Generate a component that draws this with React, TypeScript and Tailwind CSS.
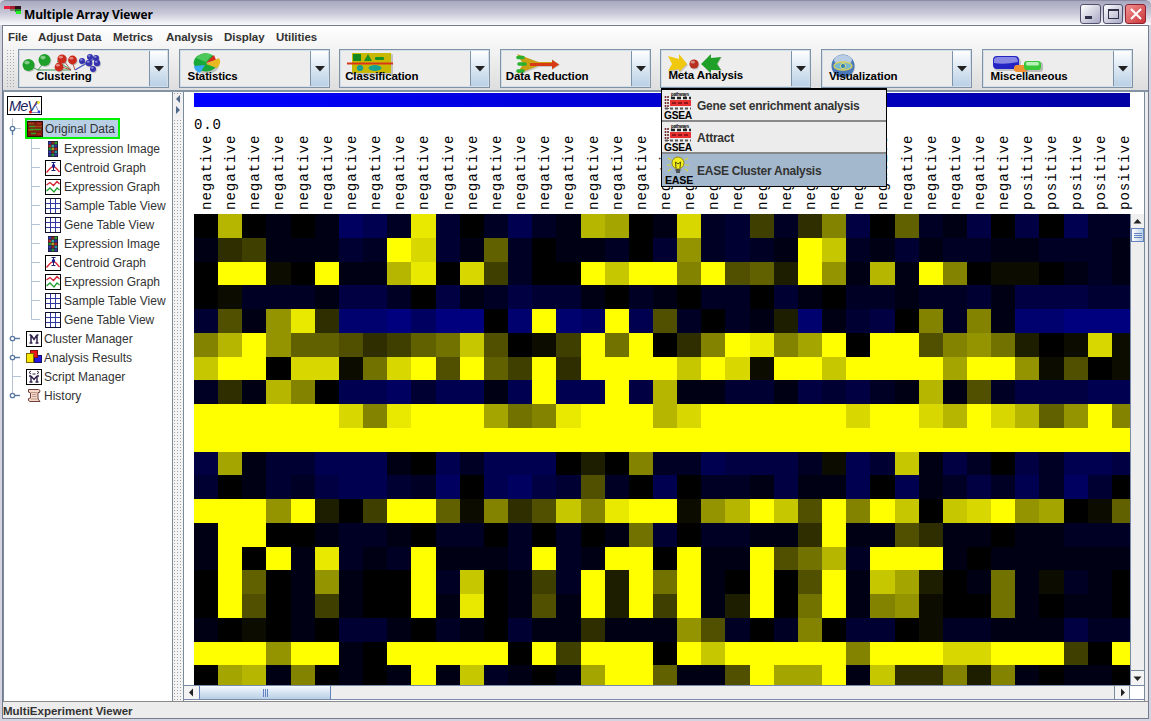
import React from "react";

const HEAT: string[] = [
  "0B0g0glkhEi0h khgBA0gDhi4h3 8j06hgj0j0khh",
  "g34gggihFDig6 h0ggh0i9hihgF Chgighhgghhhg",
  "0FF10FggBE0D4 h00FCFF8F562F 9gBgF80110ghg",
  "01hhhgjjh0jgh jiig0hg0hh0ig 0hhghhigjjjii",
  "i5g9E3mmnlnn0 mFmlFk5h0hg2m gij08h8gmmnnn",
  "8BF96653467C5 014F7F038FE8A F0FF5897201D1",
  "CFF0DD17DF5F6 4F3FFFFCFD1FF CFFFFAFF91501",
  "h3gB80kklikkg kFkkFjBggiigj ijhgBg5hjjjkk",
  "FFFFFFD8EFFFA 78EFFFBDFFFFF FDFFDBFDB69F8",
  "FFFFFFFFFFFFF FFFFFFFFFFFFF FFFFFFFFFFFFF",
  "jAgiikkkg0khk kk0208hhkjjjh 1kiCgjh0jhkkj",
  "i0gihjkkihl0k lji5h0k0hhgjg gk0kghjhkhli0",
  "FFF9F204FF618 35C8EFF19BFC5 F8FC0CDF9A016",
  "gFF00ghhg0hh0 h0h0g7i0hhgg3 Fgg53gg0gghhh",
  "gF0FgEhghFggg hFhgFF0FggF57 BhFFFg0gggggg",
  "0F60g9g00FhC0 g4hF2F7Fg0F05 FgCA20g7g1hg0",
  "0F50g4g00FgE0 g5gF2F4Fg2F07 Fg891007g0gg0",
  "g010g0iig0hg0 igg3ggg95h0h8 0ii01hhgggjhh",
  "FFF9FFg0FFFFF 0F4FFF0FCFFFF F8FFFDDFFF40F",
  "0ABg80g0gFgCh g0gAFF6gg5FAA FgC33828g0gg0",
];

function cellColor(c: string): string {
  if (c >= "g" && c <= "o") {
    const b = (c.charCodeAt(0) - 102) * 15;
    return `rgb(0,0,${b + 6})`;
  }
  const v = parseInt(c, 16);
  const y = v * 17 - (v > 0 && v < 15 ? 5 : 0);
  return `rgb(${y},${y},0)`;
}

function Ball({ x, y, r, fill }: { x: number; y: number; r: number; fill: string }) {
  return (
    <g>
      <circle cx={x + 0.8} cy={y + 1} r={r} fill="#888" opacity="0.45" />
      <circle cx={x} cy={y} r={r} fill={fill} />
      <ellipse cx={x - r * 0.25} cy={y - r * 0.4} rx={r * 0.45} ry={r * 0.3} fill="#fff" opacity="0.45" />
    </g>
  );
}

function ClusteringIcon() {
  return (
    <svg width="84" height="24" viewBox="0 0 84 24">
      <path d="M9 13 L17 17 H50 L36 8 M24 8 L17 17" stroke="#3a9a50" fill="none" />
      <path d="M42 7 L50 17 M38 13 L50 17 M51 8 L54 17" stroke="#c05040" fill="none" />
      <path d="M54 17 L66 10 L61 9 M66 10 L74 17 M66 10 L75 5" stroke="#4050c0" strokeWidth="1.2" fill="none" />
      <Ball x={7.5} y={12} r={6} fill="#1fa02a" />
      <Ball x={23.5} y={7} r={6} fill="#1fa02a" />
      <Ball x={41} y={6} r={4.6} fill="#cc2a1c" />
      <Ball x={51.5} y={7} r={4.4} fill="#cc2a1c" />
      <Ball x={38} y={14} r={4.4} fill="#cc2a1c" />
      <Ball x={61} y={8} r={3} fill="#3432b0" />
      <Ball x={69} y={4} r={3} fill="#3432b0" />
      <Ball x={75} y={5} r={3} fill="#3432b0" />
      <Ball x={68} y={10} r={3.3} fill="#3432b0" />
      <Ball x={76} y={10} r={3.2} fill="#3432b0" />
      <Ball x={72} y={16} r={3} fill="#3432b0" />
    </svg>
  );
}

function StatisticsIcon() {
  return (
    <svg width="32" height="24" viewBox="0 0 32 24">
      <ellipse cx="15" cy="12" rx="12" ry="9" fill="#999" opacity="0.5" />
      <path d="M14 10 L22 3 A12 9 0 1 0 24 14 Z" fill="#18a838" />
      <path d="M4 5 Q12 -3 20 2 L14 9 Z" fill="#4cc85a" />
      <path d="M14 10 L22 2 L24 7 Z" fill="#d82818" />
      <path d="M14 11 L27 5 Q30 10 25 15 Z" fill="#e8b820" />
      <path d="M13 12 L2 13 Q2 18 8 20 Z" fill="#38a8f0" />
    </svg>
  );
}

function ClassificationIcon() {
  return (
    <svg width="50" height="24" viewBox="0 0 50 24">
      <rect x="7" y="1" width="40" height="21" rx="1" fill="#999" opacity="0.5" />
      <rect x="6" y="0" width="39" height="20" fill="#c9b800" />
      <rect x="7" y="1" width="8" height="7" fill="#128a20" />
      <path d="M18 8 L22 1 L26 8 Z" fill="#189028" />
      <rect x="29" y="4" width="9" height="3" rx="1" fill="#189028" />
      <ellipse cx="14" cy="15" rx="3.2" ry="3" fill="#18a090" />
      <ellipse cx="29" cy="15" rx="6.5" ry="3" fill="#18a090" />
      <path d="M1 10.5 H47" stroke="#d83818" strokeWidth="1.8" />
    </svg>
  );
}

function ReductionIcon() {
  return (
    <svg width="48" height="24" viewBox="0 0 48 24">
      <path d="M4 1 L25 8 H38 V5 L46 11 L38 16 V13 H25 L5 21 L10 11 Z" fill="#999" opacity="0.5" />
      <path d="M3 0 L24 8 H38 V6 L45 10.5 L38 15 V12 H24 L3 20 L9 10 Z" fill="#c8a010" />
      <path d="M16 9 H38 V6 L45 10.5 L38 15 V12 H16 Z" fill="#d83a18" />
      <path d="M4 3.5 H9 M5 10 H11 M4 17 H9" stroke="#28b030" strokeWidth="3.6" strokeLinecap="round" />
    </svg>
  );
}

function MetaIcon() {
  return (
    <svg width="58" height="24" viewBox="0 0 58 24">
      <path d="M3 3 L14 6 V2 L22 11 L14 19 V16 L3 19 L7 11 Z" fill="#999" opacity="0.5" />
      <path d="M2 2 L13 5 V0 L21 10 L13 18 V15 L2 17 L6 10 Z" fill="#f0c810" />
      <Ball x={28} y={10} r={4.6} fill="#b83020" />
      <path d="M56 3 L44 6 V1 L36 10 L44 20 V16 L56 17 L52 10 Z" fill="#999" opacity="0.5" />
      <path d="M55 3 L45 4 V0 L35 10 L45 19 V16 L55 16 L51 10 Z" fill="#20a028" />
    </svg>
  );
}

function VisualizationIcon() {
  return (
    <svg width="28" height="24" viewBox="0 0 28 24">
      <circle cx="14" cy="13" r="11" fill="#aaa" opacity="0.5" />
      <circle cx="13" cy="12" r="11.5" fill="#4a78b8" />
      <ellipse cx="13" cy="6" rx="9" ry="5" fill="#b8cce4" />
      <ellipse cx="13" cy="12" rx="9" ry="4" fill="#78b8d0" stroke="#d8d060" strokeWidth="1.3" />
      <circle cx="13" cy="12" r="2.6" fill="#3880b0" stroke="#d8e080" />
    </svg>
  );
}

function MiscIcon() {
  return (
    <svg width="54" height="24" viewBox="0 0 54 24">
      <rect x="2" y="3" width="27" height="13" rx="4" fill="#999" opacity="0.5" />
      <rect x="1" y="1" width="26" height="13" rx="4" fill="#2424c4" />
      <path d="M2 4 Q3 2 6 2 H22 Q26 2 26 7 Q12 10 2 8 Z" fill="#8888e4" />
      <rect x="22" y="10" width="14" height="7" rx="3" fill="#f09030" />
      <rect x="33" y="7" width="18" height="10" rx="3" fill="#888" opacity="0.5" />
      <rect x="32" y="6" width="17" height="9" rx="3" fill="#38c838" />
      <rect x="34" y="7" width="13" height="3.5" rx="1.5" fill="#b8f0b8" />
    </svg>
  );
}

const TOOLS = [
  { label: "Clustering", icon: <ClusteringIcon />, ipad: "pl-[2px] pt-[3px]", tpad: "pl-[17px] pt-[19px]" },
  { label: "Statistics", icon: <StatisticsIcon />, ipad: "pl-[12px] pt-[3px]", tpad: "pl-[8px] pt-[19px]" },
  { label: "Classification", icon: <ClassificationIcon />, ipad: "pl-[6px] pt-[3px]", tpad: "pl-[5px] pt-[19px]" },
  { label: "Data Reduction", icon: <ReductionIcon />, ipad: "pl-[13px] pt-[4px]", tpad: "pl-[5px] pt-[19px]" },
  { label: "Meta Analysis", icon: <MetaIcon />, ipad: "pl-[5px] pt-[4px]", tpad: "pl-[7px] pt-[18px]" },
  { label: "Visualization", icon: <VisualizationIcon />, ipad: "pl-[8px] pt-[4px]", tpad: "pl-[7px] pt-[19px]" },
  { label: "Miscellaneous", icon: <MiscIcon />, ipad: "pl-[9px] pt-[5px]", tpad: "pl-[8px] pt-[19px]" },
];

const MENUS = [
  { label: "File", w: "w-[30px]" },
  { label: "Adjust Data", w: "w-[75px]" },
  { label: "Metrics", w: "w-[53px]" },
  { label: "Analysis", w: "w-[58px]" },
  { label: "Display", w: "w-[52px]" },
  { label: "Utilities", w: "w-[60px]" },
];

function DataIcon() {
  return (
    <svg width="16" height="16" viewBox="0 0 16 16">
      <rect x="0.5" y="0.5" width="15" height="15" fill="#7a1c10" stroke="#301008" />
      <path d="M1 2.5 H7 M8 5.5 H15 M1 9 H6" stroke="#a04818" strokeWidth="1.6" />
      <path d="M2 5.5 H8 M3 8.5 H14 M4 12.5 H9" stroke="#3c9a20" strokeWidth="1.6" />
      <path d="M10 2.5 H14 M10 13 H14" stroke="#b82818" strokeWidth="1.5" />
    </svg>
  );
}

const IMAGE_CELLS = ["#2838b0", "#902020", "#28a030", "#c02828", "#30a8a0", "#3030a0", "#209030", "#a8a020", "#b02828", "#2838b0", "#902020", "#2890a0", "#283090", "#209040", "#3838a0"];

function ImageIcon() {
  return (
    <svg width="16" height="16" viewBox="0 0 16 16">
      <rect x="3" y="0" width="10" height="16" fill="#201828" />
      {IMAGE_CELLS.map((c, i) => (
        <rect key={i} x={3.5 + (i % 3) * 3} y={0.7 + Math.floor(i / 3) * 3} width="2.7" height="2.6" fill={c} />
      ))}
    </svg>
  );
}

function CentroidIcon() {
  return (
    <svg width="16" height="16" viewBox="0 0 16 16">
      <rect x="0.5" y="0.5" width="15" height="15" fill="#fff" stroke="#000" />
      <path d="M1.5 12.5 L5 8.5 L8.5 6 L11 8 L14.5 12" fill="none" stroke="#e02030" strokeWidth="1.3" />
      <path d="M8.5 2 V11 M6.5 2.5 H10.5 M6.5 10.5 H10.5" stroke="#1c1c70" strokeWidth="1" />
      <rect x="7" y="4.5" width="3" height="3" fill="#1c1c90" />
    </svg>
  );
}

function GraphIcon() {
  return (
    <svg width="16" height="16" viewBox="0 0 16 16">
      <rect x="0.5" y="0.5" width="15" height="15" fill="#fff" stroke="#000" />
      <path d="M1.5 6 L5 3.5 L8.5 6.5 L12 2.5 L14.5 5" fill="none" stroke="#d02030" strokeWidth="1.3" />
      <path d="M1.5 12 L5 9 L9 13 L12 9 L14.5 11" fill="none" stroke="#20a030" strokeWidth="1.3" />
    </svg>
  );
}

function TableIcon() {
  return (
    <svg width="16" height="16" viewBox="0 0 16 16">
      <rect x="0.5" y="0.5" width="15" height="15" fill="#fff" stroke="#101030" />
      <path d="M5.5 1 V15 M10.5 1 V15 M1 5.5 H15 M1 10.5 H15" stroke="#3038a0" />
    </svg>
  );
}

function ManagerIcon() {
  return (
    <svg width="16" height="16" viewBox="0 0 16 16">
      <rect x="0.5" y="0.5" width="15" height="15" fill="#fff" stroke="#000" />
      <path d="M5 4 V12 M11 4 V12 M5 4 L8 8.5 L11 4 M3.5 12 H6.5 M9.5 12 H12.5 M3.5 4 H5 M11 4 H12.5" fill="none" stroke="#30204c" strokeWidth="1.5" />
    </svg>
  );
}

function ResultsIcon() {
  return (
    <svg width="16" height="16" viewBox="0 0 16 16">
      <rect x="8.5" y="5.5" width="7" height="7" fill="#2418e0" stroke="#181060" />
      <rect x="4.5" y="0.5" width="7" height="7" fill="#e81818" stroke="#801010" />
      <rect x="0.5" y="3.5" width="7" height="9" fill="#f8e800" stroke="#806808" />
    </svg>
  );
}

function ScriptIcon() {
  return (
    <svg width="16" height="16" viewBox="0 0 16 16">
      <rect x="0.5" y="0.5" width="15" height="15" fill="#fff" stroke="#000" />
      <path d="M5 7 V13 M11 7 V13 M5 7 L8 10.5 L11 7 M3.5 13 H6.5 M9.5 13 H12.5 M3 7 H5 M11 7 H13" fill="none" stroke="#30204c" strokeWidth="1.4" />
      <path d="M5 2 L3 3.5 L5 5 M11 2 L13 3.5 L11 5 M6.5 5 H9.5" fill="none" stroke="#30204c" />
    </svg>
  );
}

function HistoryIcon() {
  return (
    <svg width="16" height="16" viewBox="0 0 16 16">
      <path d="M2.5 1.5 H12.5 Q15 2 13.5 4.5 H12 V11 L14 13.5 H4 Q1.5 13 2.5 10.5 L4.5 10 V5 Q1.5 5 2.5 1.5 Z" fill="#f4d8cc" stroke="#704038" />
      <path d="M5 4.5 H11 M6 6.5 H10.5 M6 8.5 H10.5 M5 11 H11" stroke="#c09888" />
    </svg>
  );
}

type Kind = "image" | "centroid" | "graph" | "table";
const LEAVES: { label: string; kind: Kind }[] = [
  { label: "Expression Image", kind: "image" },
  { label: "Centroid Graph", kind: "centroid" },
  { label: "Expression Graph", kind: "graph" },
  { label: "Sample Table View", kind: "table" },
  { label: "Gene Table View", kind: "table" },
  { label: "Expression Image", kind: "image" },
  { label: "Centroid Graph", kind: "centroid" },
  { label: "Expression Graph", kind: "graph" },
  { label: "Sample Table View", kind: "table" },
  { label: "Gene Table View", kind: "table" },
];
const LEAF_ICON: Record<Kind, React.ReactElement> = {
  image: <ImageIcon />,
  centroid: <CentroidIcon />,
  graph: <GraphIcon />,
  table: <TableIcon />,
};

const ROOTS = [
  { label: "Cluster Manager", icon: <ManagerIcon />, handle: true },
  { label: "Analysis Results", icon: <ResultsIcon />, handle: true },
  { label: "Script Manager", icon: <ScriptIcon />, handle: false },
  { label: "History", icon: <HistoryIcon />, handle: true },
];

function RootGuide({ handle, last }: { handle: boolean; last: boolean }) {
  return (
    <svg width="22" height="19" viewBox="0 0 22 19" className="shrink-0">
      <path d={last ? "M8.5 0 V9" : "M8.5 0 V19"} stroke="#b4c4d4" />
      {handle ? (
        <g>
          <path d="M10 9.5 H16" stroke="#5878a0" strokeWidth="1.4" />
          <circle cx="8.5" cy="9.5" r="2.2" fill="#fff" stroke="#5878a0" strokeWidth="1.3" />
        </g>
      ) : (
        <path d="M9 9.5 H17" stroke="#b4c4d4" />
      )}
    </svg>
  );
}

function Tree() {
  return (
    <div className="flex h-full w-[170px] shrink-0 flex-col overflow-hidden border-l border-r border-[#7a8a99] bg-white pt-[4px] text-[12px] text-[#333]">
      <svg width="36" height="20" viewBox="0 0 36 20" className="ml-[3px] shrink-0">
        <rect x="0.5" y="0.5" width="34" height="18" fill="#fff" stroke="#000" />
        <text x="2" y="15" fontFamily="Liberation Sans" fontStyle="italic" fontSize="14.5" fill="#201c60" textLength="28">MeV</text>
        <path d="M22 16 L31 7 M24 16.5 H32 L29 10" stroke="#6060b0" strokeWidth="0.8" fill="none" />
        <circle cx="23.5" cy="16" r="1.6" fill="#e02020" />
        <circle cx="31.5" cy="6.5" r="1.4" fill="#f0e020" />
        <circle cx="32" cy="16" r="1.4" fill="#3040d0" />
      </svg>
      <div className="mt-[2px] flex h-[21px] shrink-0 items-center">
        <svg width="21" height="21" viewBox="0 0 21 21" className="shrink-0">
          <path d="M8.5 0 V21" stroke="#b4c4d4" />
          <path d="M10 10.5 H17" stroke="#b4c4d4" />
          <path d="M8.5 12 V17" stroke="#5878a0" strokeWidth="1.4" />
          <circle cx="8.5" cy="10.5" r="2.2" fill="#fff" stroke="#5878a0" strokeWidth="1.3" />
        </svg>
        <div className="flex h-[21px] w-[95px] items-center gap-[2px] border-2 border-[#00f000] bg-[#b8cfe5]">
          <DataIcon />
          <span className="whitespace-nowrap">Original Data</span>
        </div>
      </div>
      {LEAVES.map((l, i) => (
        <div key={i} className="flex h-[19px] shrink-0 items-center">
          <svg width="41" height="19" viewBox="0 0 41 19" className="shrink-0">
            <path d="M8.5 0 V19" stroke="#b4c4d4" />
            <path d={i === LEAVES.length - 1 ? "M27.5 0 V9.5 H36" : "M27.5 0 V19 M27.5 9.5 H36"} stroke="#b4c4d4" fill="none" />
          </svg>
          {LEAF_ICON[l.kind]}
          <span className="ml-[3px] whitespace-nowrap">{l.label}</span>
        </div>
      ))}
      {ROOTS.map((r, i) => (
        <div key={r.label} className="flex h-[19px] shrink-0 items-center">
          <RootGuide handle={r.handle} last={i === ROOTS.length - 1} />
          {r.icon}
          <span className="ml-[2px] whitespace-nowrap">{r.label}</span>
        </div>
      ))}
    </div>
  );
}

function Tri({ d }: { d: string }) {
  return (
    <svg width="9" height="9" viewBox="0 0 9 9">
      <path d={d} fill="#222" />
    </svg>
  );
}

function Viewer() {
  return (
    <div className="flex h-full w-[962px] flex-col border-l border-r border-[#7a8a99] bg-white">
      <div className="flex h-[593px] shrink-0">
        <div className="ml-[10px] flex w-[936px] shrink-0 flex-col">
          <div className="mt-px h-[14px] shrink-0 bg-linear-to-r from-[#0000ff] to-[#0000a4]" />
          <div className="h-[27px] shrink-0 pt-[10px] font-[Liberation_Mono,monospace] text-[14px] leading-[16px] tracking-[0.8px] text-black">0.0</div>
          <div className="grid h-[80px] shrink-0 grid-cols-[repeat(39,24.16px)]">
            {Array.from({ length: 39 }, (_, i) => (
              <div key={i} className="flex h-[76px] pl-[6px]">
                <span className="rotate-180 font-[Liberation_Mono,monospace] text-[14.2px] leading-[14px] tracking-[0.9px] text-black [writing-mode:vertical-rl]">
                  {i < 34 ? "negative" : "positive"}
                </span>
              </div>
            ))}
          </div>
          <div className="grid h-[472px] shrink-0 auto-rows-[23.75px] grid-cols-[repeat(39,24.16px)] overflow-hidden">
            {HEAT.join("")
              .replace(/ /g, "")
              .split("")
              .map((c, i) => (
                <div key={i} style={{ backgroundColor: cellColor(c) }} />
              ))}
          </div>
        </div>
        <div className="mt-[122px] flex w-[14px] flex-col border-l border-[#7a8aa9] bg-[#eee]">
          <div className="flex h-[14px] items-center justify-center bg-[#f0f0f0]">
            <Tri d="M4.5 2 L8.5 6.5 H0.5 Z" />
          </div>
          <div className="flex h-[14px] flex-col items-center justify-center gap-px border border-[#6382bf] bg-linear-to-r from-white to-[#b8cfe5]">
            <div className="h-px w-[8px] bg-[#6382bf]" />
            <div className="h-px w-[8px] bg-[#6382bf]" />
            <div className="h-px w-[8px] bg-[#6382bf]" />
          </div>
          <div className="flex-1" />
          <div className="flex h-[15px] items-center justify-center border-t border-[#7a8a99] bg-[#f4f4f4]">
            <Tri d="M4.5 7 L8.5 2.5 H0.5 Z" />
          </div>
        </div>
      </div>
      <div className="flex h-[15px] shrink-0 border-y border-[#7a8aa9] bg-[#eee]">
        <div className="flex w-[15px] items-center justify-center bg-[#f4f4f4]">
          <Tri d="M2 4.5 L6 0.5 V8.5 Z" />
        </div>
        <div className="flex w-[132px] items-center justify-center gap-px border-x border-[#6382bf] bg-linear-to-b from-[#f4f9ff] to-[#b8cfe5]">
          <div className="h-[8px] w-px bg-[#6382bf]" />
          <div className="h-[8px] w-px bg-[#6382bf]" />
          <div className="h-[8px] w-px bg-[#6382bf]" />
        </div>
        <div className="flex-1" />
        <div className="flex w-[16px] items-center justify-center border-x border-[#7a8a99] bg-[#f4f4f4]">
          <Tri d="M7 4.5 L3 0.5 V8.5 Z" />
        </div>
        <div className="w-[14px] bg-white" />
      </div>
    </div>
  );
}

function GseaIcon() {
  return (
    <svg width="29" height="29" viewBox="0 0 29 29">
      <text x="7" y="4.5" fontFamily="Liberation Sans" fontWeight="bold" fontSize="4.5" textLength="18" lengthAdjust="spacingAndGlyphs">pathways</text>
      <path d="M1.5 5 V18 M4 5 V18" stroke="#703030" strokeWidth="1.6" strokeDasharray="2 1" />
      <path d="M7 7 H27" stroke="#222" strokeWidth="2.4" strokeDasharray="4 2" />
      <rect x="6" y="9" width="21" height="6" fill="#e83030" />
      <path d="M8 12 H26" stroke="#901818" strokeWidth="1.8" strokeDasharray="4 2" />
      <path d="M1 17.5 H27" stroke="#555" strokeWidth="1.8" strokeDasharray="3 2" />
      <text x="0" y="27.5" fontFamily="Liberation Sans" fontWeight="bold" fontSize="10.5" textLength="28" lengthAdjust="spacingAndGlyphs">GSEA</text>
    </svg>
  );
}

function EaseIcon() {
  return (
    <svg width="29" height="29" viewBox="0 0 29 29">
      <path d="M3 2 L6 4 M2 9 H6 M3 15 L6 13 M23 2 L20 4 M24 9 H20 M23 15 L20 13" stroke="#d8d830" strokeWidth="1.2" />
      <circle cx="13" cy="7" r="6" fill="#f4f020" stroke="#807808" strokeWidth="0.8" />
      <path d="M11 12 L10.5 6 L13 8 L15.5 6 L15 12" fill="none" stroke="#504808" />
      <path d="M10.5 14 H15.5 M11 16 H15" stroke="#303030" strokeWidth="1.4" />
      <text x="0" y="27.5" fontFamily="Liberation Sans" fontWeight="bold" fontSize="10.5" textLength="28" lengthAdjust="spacingAndGlyphs">EASE</text>
    </svg>
  );
}

function Popup() {
  return (
    <div className="absolute left-[661px] top-[88px] flex h-[99px] w-[226px] flex-col border border-t-2 border-black bg-[#ececec] text-[12px] font-bold tracking-[-0.25px] text-[#333]">
      <div className="flex h-[32px] items-center border-b-2 border-[#888] pl-[2px]">
        <GseaIcon />
        <span className="ml-[4px] pt-px">Gene set enrichment analysis</span>
      </div>
      <div className="flex h-[32px] items-center border-b-2 border-[#888] pl-[2px]">
        <GseaIcon />
        <span className="ml-[4px] pt-px">Attract</span>
      </div>
      <div className="flex h-[32px] items-center bg-[#a3b8cc] pl-[3px]">
        <EaseIcon />
        <span className="ml-[3px] pt-px">EASE Cluster Analysis</span>
      </div>
    </div>
  );
}

export default function App() {
  return (
    <div className="relative flex h-[721px] w-[1151px] flex-col overflow-hidden bg-[#d4d4e0] font-[Liberation_Sans,Arial,sans-serif]">
      <div className="flex h-[25px] shrink-0 items-center rounded-t-[6px] border-t border-[#8c8ca4] bg-linear-to-b from-[#a8a8c0] via-[#c8c8d8] to-[#fafafd] pl-[4px] pr-[5px]">
        <svg width="17" height="16" viewBox="0 0 17 16" className="shrink-0">
          <rect x="0" y="1" width="6" height="3" fill="#e82040" />
          <rect x="6" y="1" width="5" height="3" fill="#a82030" />
          <rect x="11" y="1" width="6" height="3" fill="#301018" />
          <rect x="6" y="4" width="5" height="2" fill="#808070" />
          <rect x="11" y="4" width="6" height="3" fill="#208030" />
          <rect x="12" y="6" width="5" height="3" fill="#20f020" />
        </svg>
        <span className="ml-[3px] flex-1 pt-[3px] font-[Open_Sans,sans-serif] text-[12px] font-bold tracking-[-0.1px] text-black">Multiple Array Viewer</span>
        <div className="flex gap-[2px] pt-[2px]">
          <div className="flex h-[20px] w-[21px] items-end rounded-[3px] border border-[#50506c] bg-linear-to-br from-white to-[#a8a8c4] p-[4px]">
            <div className="h-[3px] w-[7px] bg-[#303048]" />
          </div>
          <div className="flex h-[20px] w-[20px] items-center justify-center rounded-[3px] border border-[#50506c] bg-linear-to-br from-white to-[#a8a8c4]">
            <div className="h-[10px] w-[11px] border border-t-2 border-[#303048]" />
          </div>
          <div className="flex h-[20px] w-[21px] items-center justify-center rounded-[3px] border border-[#902030] bg-linear-to-br from-[#f09090] to-[#c83038]">
            <svg width="12" height="12" viewBox="0 0 12 12">
              <path d="M1 1 L11 11 M11 1 L1 11" stroke="#fff" strokeWidth="2" />
            </svg>
          </div>
        </div>
      </div>
      <div className="mx-[2px] flex h-[694px] shrink-0 flex-col border border-[#747c90] bg-[#ececec]">
        <div className="flex h-[66px] shrink-0 flex-col border-b-2 border-[#8494a4] bg-linear-to-b from-white to-[#dedede]">
          <div className="flex h-[23px] shrink-0 items-center pl-[5px] text-[11.5px] font-bold tracking-[-0.05px] text-[#333]">
            {MENUS.map((m) => (
              <span key={m.label} className={`${m.w} whitespace-nowrap`}>{m.label}</span>
            ))}
          </div>
          <div className="flex h-[41px] items-start">
            <div className="ml-[3px] mr-[2px] h-[38px] w-[10px] shrink-0 bg-[radial-gradient(#a8a8a8_0.8px,transparent_1px)] bg-[size:3px_3px]" />
            <div className="flex gap-[9.6px]">
              {TOOLS.map((t) => (
                <div key={t.label} className="flex h-[39px] w-[151px] border border-[#7d93a9] bg-[#ededed] outline-1 -outline-offset-2 outline-[#d5dde5]">
                  <div className="grid w-[131px] overflow-hidden border-r border-[#7d93a9]">
                    <div className={`col-start-1 row-start-1 ${t.ipad}`}>{t.icon}</div>
                    <div className={`z-10 col-start-1 row-start-1 ${t.tpad} whitespace-nowrap text-[11.5px] font-bold leading-[14px] tracking-[-0.12px] text-black`}>{t.label}</div>
                  </div>
                  <div className="flex flex-1 items-center justify-center bg-linear-to-b from-white to-[#b8cfe5]">
                    <svg width="10" height="6" viewBox="0 0 10 6">
                      <path d="M0 0 H10 L5 5.5 Z" fill="#222" />
                    </svg>
                  </div>
                </div>
              ))}
            </div>
          </div>
        </div>
        <div className="flex h-[609px] shrink-0">
          <Tree />
          <div className="flex w-[10px] shrink-0 flex-col items-center bg-[#f4f4f4] bg-[radial-gradient(#a0a0a0_0.8px,transparent_1px)] bg-[size:3px_3px] pt-[2px]">
            <svg width="8" height="24" viewBox="0 0 8 24">
              <rect width="8" height="24" fill="#f0f0f0" />
              <path d="M6 1 V9 L2 5 Z M2 12 V20 L6 16 Z" fill="#506888" />
            </svg>
          </div>
          <Viewer />
        </div>
        <div className="flex flex-1 items-center border-t border-[#8a8a8a] pt-px text-[11.5px] font-bold text-[#333]">MultiExperiment Viewer</div>
      </div>
      <Popup />
    </div>
  );
}
